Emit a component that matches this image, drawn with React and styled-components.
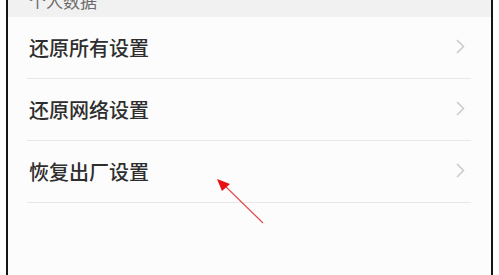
import React from "react";
import styled, { createGlobalStyle } from "styled-components";

const Global = createGlobalStyle`
  html, body { margin: 0; padding: 0; background: #ffffff; }
  body { font-family: "Noto Sans CJK SC", "Noto Sans", sans-serif; }
  #root { width: 499px; height: 275px; overflow: hidden; }
`;

const Frame = styled.div`
  position: relative;
  margin: 0 6px;
  width: 483px;
  height: 275px;
  border-left: 2px solid #141414;
  border-right: 2px solid #141414;
  background: #fcfcfc;
  overflow: hidden;
`;

const SectionHeader = styled.div`
  height: 34px;
  margin-top: -17px;
  background: #f1f1f1;
  display: flex;
  align-items: center;
  padding-left: 21px;
  font-size: 17px;
  color: #6a6a6a;
`;

const List = styled.div`
  padding: 0 20px 0 19px;
`;

const Row = styled.div`
  height: 61px;
  border-bottom: 1px solid #e8e8e8;
  display: flex;
  align-items: center;
  justify-content: space-between;
  padding-left: 2px;
`;

const Label = styled.span`
  font-size: 20px;
  color: #2e2e2e;
  font-weight: 500;
`;

const Chevron = styled.svg`
  width: 9px;
  height: 15px;
  margin-right: 6px;
  margin-top: -3px;
`;

const Arrow = styled.svg`
  position: absolute;
  left: 0;
  top: 0;
  width: 483px;
  height: 275px;
  pointer-events: none;
`;

const items = ["还原所有设置", "还原网络设置", "恢复出厂设置"];

export default function App() {
  return (
    <>
      <Global />
      <Frame>
        <SectionHeader>个人数据</SectionHeader>
        <List>
          {items.map((t) => (
            <Row key={t}>
              <Label>{t}</Label>
              <Chevron viewBox="0 0 9 15">
                <polyline
                  points="1,1 7.5,7.5 1,14"
                  fill="none"
                  stroke="#cacaca"
                  strokeWidth="1.5"
                />
              </Chevron>
            </Row>
          ))}
        </List>
        <Arrow viewBox="0 0 483 275">
          <line x1="255" y1="223" x2="215" y2="184" stroke="#e05050" strokeWidth="1.2" />
          <polygon points="209,179 222,184 214,191" fill="#e81010" />
        </Arrow>
      </Frame>
    </>
  );
}
